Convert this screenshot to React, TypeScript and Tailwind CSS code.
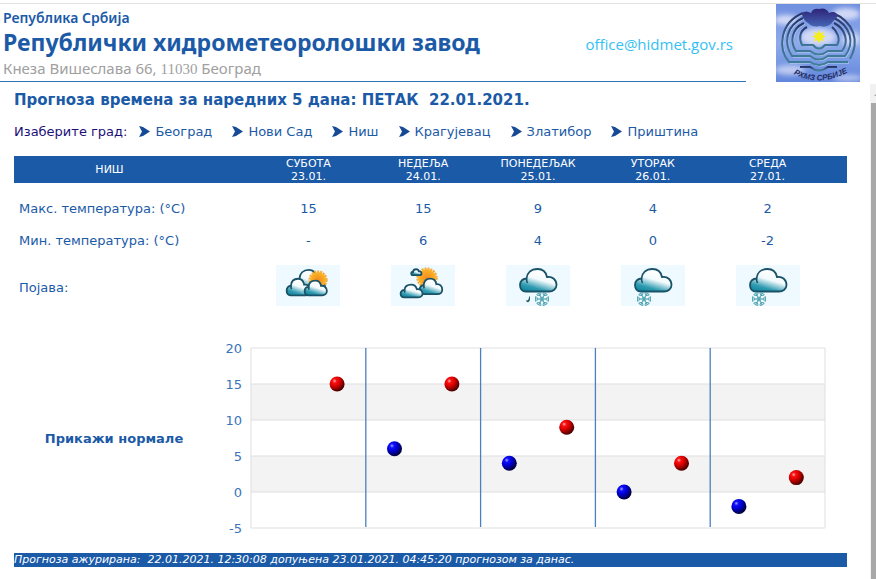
import React from 'react';

interface DayForecast {
    day: string;
    date: string;
    max: number;
    min: number | null;
    icon: 'cloudySun' | 'partlySunny' | 'sleet' | 'snow';
    description: string;
}

const cities = ['Београд', 'Нови Сад', 'Ниш', 'Крагујевац', 'Златибор', 'Приштина'];

const forecast: DayForecast[] = [
    { day: 'СУБОТА', date: '23.01.', max: 15, min: null, icon: 'cloudySun', description: 'Претежно облачно' },
    { day: 'НЕДЕЉА', date: '24.01.', max: 15, min: 6, icon: 'partlySunny', description: 'Променљиво облачно' },
    { day: 'ПОНЕДЕЉАК', date: '25.01.', max: 9, min: 4, icon: 'sleet', description: 'Киша и снег' },
    { day: 'УТОРАК', date: '26.01.', max: 4, min: 0, icon: 'snow', description: 'Снег' },
    { day: 'СРЕДА', date: '27.01.', max: 2, min: -2, icon: 'snow', description: 'Снег' },
];

const CLOUD = 'M7 23.500C3 23.500 1 20.500 1 17C1 13 4 10.500 7.500 10.500C8 5 12 1 18.500 1C23.500 1 27 4 28 9C33.500 8 37.500 12 37.500 17C37.500 21 34 23.500 30 23.500Z';

const Cloud: React.FC<{ x: number; y: number; sx: number; sy: number }> = ({ x, y, sx, sy }) => (
    <g transform={`translate(${x} ${y}) scale(${sx} ${sy})`}>
        <path d={CLOUD} fill="url(#cloudFill)" stroke="#1a5267" strokeWidth="1.800" vectorEffect="non-scaling-stroke" />
        <path d="M8.500 15C7.500 13 7.500 12 7.500 10.500" fill="none" stroke="#1a5267" strokeWidth="1.600" vectorEffect="non-scaling-stroke" />
    </g>
);

const Sun: React.FC<{ cx: number; cy: number; r: number }> = ({ cx, cy, r }) => (
    <g>
        <circle cx={cx} cy={cy} r={r + 0.5} fill="none" stroke="#f5a93a" strokeWidth="2.200" strokeDasharray="2 1" />
        <circle cx={cx} cy={cy} r={r} fill="url(#sunFill)" />
    </g>
);

const Snowflake: React.FC<{ cx: number; cy: number }> = ({ cx, cy }) => (
    <g transform={`translate(${cx} ${cy})`} fill="none" stroke="#4a9fae">
        <circle r="2" strokeWidth="0.800" />
        {[30, 90, 150, 210, 270, 330].map((angle) => (
            <g key={angle} transform={`rotate(${angle})`}>
                <path d="M0 0V-6.500M-2.500 -6L0 -3.800L2.500 -6" strokeWidth="0.900" />
                <path d="M-2.500 -6.500H2.500" strokeWidth="0.900" />
            </g>
        ))}
    </g>
);

const WeatherIcon: React.FC<{ type: DayForecast['icon']; label: string }> = ({ type, label }) => (
    <svg viewBox="0 0 64 41" className="w-16 h-[41px] mx-auto block bg-[#eefaff]" role="img" aria-label={label}>
        {type === 'cloudySun' && (
            <>
                <Cloud x={17} y={4} sx={0.85} sy={0.95} />
                <Sun cx={42} cy={15} r={8} />
                <Cloud x={10} y={13} sx={0.65} sy={0.74} />
                <Cloud x={28} y={15} sx={0.61} sy={0.65} />
            </>
        )}
        {type === 'partlySunny' && (
            <>
                <Sun cx={36} cy={13} r={9} />
                <Cloud x={20} y={4} sx={0.28} sy={0.26} />
                <Cloud x={28} y={13} sx={0.62} sy={0.69} />
                <Cloud x={9} y={19} sx={0.6} sy={0.57} />
            </>
        )}
        {(type === 'sleet' || type === 'snow') && <Cloud x={13} y={3} sx={1} sy={1} />}
        {type === 'sleet' && (
            <>
                <path d="M24 31V34C24 38 20 38 20 35C21 36 23 35 23 32Z" fill="#2c5f73" />
                <Snowflake cx={36} cy={34} />
            </>
        )}
        {type === 'snow' && <Snowflake cx={23} cy={34} />}
    </svg>
);

const Logo: React.FC = () => (
    <svg viewBox="0 0 84 78" className="w-[84px] h-[78px] shrink-0" role="img" aria-label="РХМЗ Србије">
        <defs>
            <linearGradient id="sky" x1="0" y1="0" x2="0" y2="1">
                <stop offset="0" stopColor="#6f8fe0" />
                <stop offset="0.5" stopColor="#8eaaea" />
                <stop offset="1" stopColor="#6286dd" />
            </linearGradient>
            <linearGradient id="logoCloud" x1="0" y1="0" x2="0" y2="1">
                <stop offset="0" stopColor="#2d2378" />
                <stop offset="1" stopColor="#4565b4" />
            </linearGradient>
            <linearGradient id="logoLine" x1="0" y1="0" x2="0" y2="1">
                <stop offset="0" stopColor="#283468" />
                <stop offset="0.5" stopColor="#3b6492" />
                <stop offset="1" stopColor="#3f7f98" />
            </linearGradient>
            <filter id="haze" x="-20%" y="-20%" width="140%" height="140%">
                <feGaussianBlur stdDeviation="2.5" />
            </filter>
            <clipPath id="logoClip">
                <rect width="84" height="78" />
            </clipPath>
        </defs>
        <rect width="84" height="78" fill="url(#sky)" />
        <g clipPath="url(#logoClip)">
            <g fill="#d2d9f6" filter="url(#haze)">
                <ellipse cx="10" cy="16" rx="12" ry="5" />
                <ellipse cx="70" cy="10" rx="14" ry="6" />
                <ellipse cx="42" cy="33" rx="18" ry="9" />
                <ellipse cx="75" cy="35" rx="9" ry="7" />
                <ellipse cx="14" cy="66" rx="15" ry="5" opacity="0.8" />
                <ellipse cx="72" cy="74" rx="15" ry="3" opacity="0.8" />
            </g>
        </g>
        <g fill="none" stroke="#c8e2f4" strokeWidth="1" transform="translate(1 1)" opacity="0.8">
            <path d="M27 9C3 19 2 45 13 58H34Q43 64 52 58H72" />
            <path d="M27 14C9 22 8 40 16 52H34Q43 59 52 52H69C79 39 75 22 58 14" />
            <path d="M28 19C15 25 14 38 20 47H34Q43 54 52 47H66" />
        </g>
        <g fill="none" stroke="url(#logoLine)" strokeWidth="2">
            <path d="M27 9C3 19 2 45 13 58H34Q43 64 52 58H72M74 55C84 37 78 18 57 9" />
            <path d="M27 14C9 22 8 40 16 52H34Q43 59 52 52H69C79 39 75 22 58 14" />
            <path d="M28 19C15 25 14 38 20 47H34Q43 54 52 47H66C73 38 70 25 58 19" />
            <path d="M31 23C23 27 23 35 26 41H37Q43 48 49 41H61C65 35 61 27 56 23" />
            <path d="M24 63H34Q43 70 52 63H61" />
        </g>
        <path d="M26 9Q30 6 35 9Q37 4 43 5Q50 3 53 9Q59 6 62 12Q58 16 55 20Q50 24 44 22Q37 24 32 19Q26 15 26 9Z" fill="url(#logoCloud)" />
        <path d="M43 26L44.500 29.500L48 27.500L46.500 31L50 32.500L46.500 34L48 37.500L44.500 36L43 39.500L41.500 36L38 37.500L39.500 34L36 32.500L39.500 31L38 27.500L41.500 29.500Z" fill="#f6ee1c" />
        <path id="logoArc" d="M14 68Q42 86 76 66" fill="none" />
        <text fill="#252e62" className="font-['Liberation_Sans',sans-serif] text-[8px] font-bold italic">
            <textPath href="#logoArc" startOffset="4">РХМЗ  СРБИЈЕ</textPath>
        </text>
    </svg>
);

const Header: React.FC = () => (
    <header className="border-t border-[#e2e2e2] mt-[3px] flex items-start pr-4">
        <div className="flex-1 h-[78px] mr-[30px] pl-[3px] pr-[13px] border-b border-[#2f72b8] flex items-start justify-between font-['Noto_Sans',sans-serif]">
            <div className="text-[#1b5aa7] pt-1">
                <p className="text-sm leading-5 font-semibold">Република Србија</p>
                <h1 className="text-[23px] leading-7 font-bold">Републички хидрометеоролошки завод</h1>
                <p className="text-[15px] leading-6 text-[#a0a0a0]">
                    Кнеза Вишеслава 66, <span className="font-['Liberation_Serif',serif]">11030</span> Београд
                </p>
            </div>
            <a href="mailto:office@hidmet.gov.rs" className="text-[15px] leading-5 text-[#35c0f5] font-['Open_Sans',sans-serif] pt-[30px]">office@hidmet.gov.rs</a>
        </div>
        <Logo />
    </header>
);

const CityNav: React.FC = () => (
    <nav className="flex flex-wrap items-center text-[13px] leading-5 mt-3">
        <span className="text-[#1c0f78] mr-3">Изаберите град:</span>
        <ul className="flex flex-wrap gap-x-5">
            {cities.map((city) => (
                <li key={city}>
                    <a href="#" className="flex items-center gap-[5px] text-[#1b5aa7]">
                        <svg viewBox="0 0 11 12" className="w-[11px] h-3">
                            <path d="M0 0L4 1L11 5.500L4 10L0 11L3 5.500Z" fill="#174a96" />
                        </svg>
                        {city}
                    </a>
                </li>
            ))}
        </ul>
    </nav>
);

const ForecastTable: React.FC = () => (
    <table className="w-full table-fixed mt-[14px] text-[13px] leading-5 text-center">
        <colgroup>
            <col className="w-[237px]" />
            {forecast.map((f) => <col key={f.date} />)}
            <col className="w-[22px]" />
        </colgroup>
        <thead className="bg-[#1b5aa7] text-white text-[11px] leading-[13px]">
            <tr className="h-[27px]">
                <th scope="col" className="font-normal pr-[46px]">НИШ</th>
                {forecast.map((f) => (
                    <th key={f.date} scope="col" className="font-normal">
                        {f.day}<br />{f.date}
                    </th>
                ))}
                <td />
            </tr>
        </thead>
        <tbody>
            <tr>
                <th scope="row" className="font-normal text-left pl-[5px] pt-4 pb-[6px]">Макс. температура: (°C)</th>
                {forecast.map((f) => <td key={f.date} className="pt-4 pb-[6px]">{f.max}</td>)}
                <td />
            </tr>
            <tr>
                <th scope="row" className="font-normal text-left pl-[5px] pt-[6px] pb-[7px]">Мин. температура: (°C)</th>
                {forecast.map((f) => <td key={f.date} className="pt-[6px] pb-[7px]">{f.min ?? '-'}</td>)}
                <td />
            </tr>
            <tr>
                <th scope="row" className="font-normal text-left pl-[5px] pt-1">Појава:</th>
                {forecast.map((f) => (
                    <td key={f.date} className="py-[7px]">
                        <WeatherIcon type={f.icon} label={f.description} />
                    </td>
                ))}
                <td />
            </tr>
        </tbody>
    </table>
);

// Plot area inside the viewBox
const LEFT = 37;
const TOP = 9;
const COL = 114.8;
const toY = (t: number) => TOP + (20 - t) * 7.2;

const TemperatureChart: React.FC = () => (
    <svg viewBox="0 0 611 198" className="flex-1 min-w-0 block overflow-visible" role="img" aria-label="Температура">
        <rect x={LEFT} y={toY(15)} width="574" height="36" fill="#f3f3f3" />
        <rect x={LEFT} y={toY(5)} width="574" height="36" fill="#f3f3f3" />
        {[20, 15, 10, 5, 0, -5].map((t) => (
            <g key={t}>
                <line x1={LEFT} x2="611" y1={toY(t)} y2={toY(t)} stroke="#dfdfdf" />
                <text x="28" y={toY(t) + 5} textAnchor="end" fill="#3a74b8" className="text-[13px] font-['DejaVu_Sans',sans-serif]">{t}</text>
            </g>
        ))}
        <path d="M37 9V189M611 9V189" stroke="#dfdfdf" />
        {[1, 2, 3, 4].map((i) => (
            <line key={i} x1={LEFT + i * COL} x2={LEFT + i * COL} y1={TOP} y2="188" stroke="#4a80bd" strokeWidth="1.300" />
        ))}
        {forecast.map((f, i) => (
            <g key={f.date}>
                {f.min !== null && <circle cx={LEFT + (i + 0.25) * COL} cy={toY(f.min)} r="7.5" fill="url(#ballBlue)" />}
                <circle cx={LEFT + (i + 0.75) * COL} cy={toY(f.max)} r="7.5" fill="url(#ballRed)" />
            </g>
        ))}
    </svg>
);

// Gradients shared by the weather icons and the chart
const Gradients: React.FC = () => (
    <svg className="absolute w-0 h-0" aria-hidden="true">
        <defs>
            <linearGradient id="cloudFill" x1="0.2" y1="1" x2="0.6" y2="0.15">
                <stop offset="0" stopColor="#0f86a0" />
                <stop offset="0.25" stopColor="#2f9bb1" />
                <stop offset="0.65" stopColor="#f2fafc" />
                <stop offset="1" stopColor="#ffffff" />
            </linearGradient>
            <radialGradient id="sunFill">
                <stop offset="0" stopColor="#f38a1c" />
                <stop offset="1" stopColor="#fbb52a" />
            </radialGradient>
            <radialGradient id="ballRed" cx="0.33" cy="0.3" r="0.7">
                <stop offset="0" stopColor="#ffb0b0" />
                <stop offset="0.2" stopColor="#fb1010" />
                <stop offset="0.5" stopColor="#d80000" />
                <stop offset="1" stopColor="#4c0000" />
            </radialGradient>
            <radialGradient id="ballBlue" cx="0.33" cy="0.3" r="0.7">
                <stop offset="0" stopColor="#a8a8ff" />
                <stop offset="0.2" stopColor="#1010fb" />
                <stop offset="0.5" stopColor="#0000d4" />
                <stop offset="1" stopColor="#00003c" />
            </radialGradient>
        </defs>
    </svg>
);

export default function App() {
    return (
        <div className="min-h-screen flex flex-col bg-white overflow-x-hidden">
            <Gradients />
            <Header />
            <div className="flex-1 flex mt-[2px]">
                <main className="flex-1 min-w-0 pl-[14px] pr-[23px] pt-[6px] font-['DejaVu_Sans',Verdana,sans-serif] text-[#1b5aa7]">
                    <h2 className="text-[15px] leading-5 font-bold whitespace-pre-wrap">Прогноза времена за наредних 5 дана: ПЕТАК  22.01.2021.</h2>
                    <CityNav />
                    <ForecastTable />
                    <div className="flex items-center mt-[26px] pr-[22px]">
                        <div className="w-[200px] text-center">
                            <button type="button" className="text-[13px] leading-5 font-bold">Прикажи нормале</button>
                        </div>
                        <TemperatureChart />
                    </div>
                    <footer className="bg-[#1b5aa7] text-white text-[11px] leading-[14px] italic mt-4 whitespace-pre-wrap">Прогноза ажурирана:  22.01.2021. 12:30:08 допуњена 23.01.2021. 04:45:20 прогнозом за данас.</footer>
                </main>
                <div className="w-[6px] bg-[#f1f1f1] flex flex-col pl-px" aria-hidden="true">
                    <svg viewBox="0 0 5 19" className="w-[5px] h-[19px]">
                        <path d="M3 12L6 9V12Z" fill="#a3a3a3" />
                    </svg>
                    <div className="flex-1 bg-[#a8a8a8]" />
                </div>
            </div>
        </div>
    );
}
